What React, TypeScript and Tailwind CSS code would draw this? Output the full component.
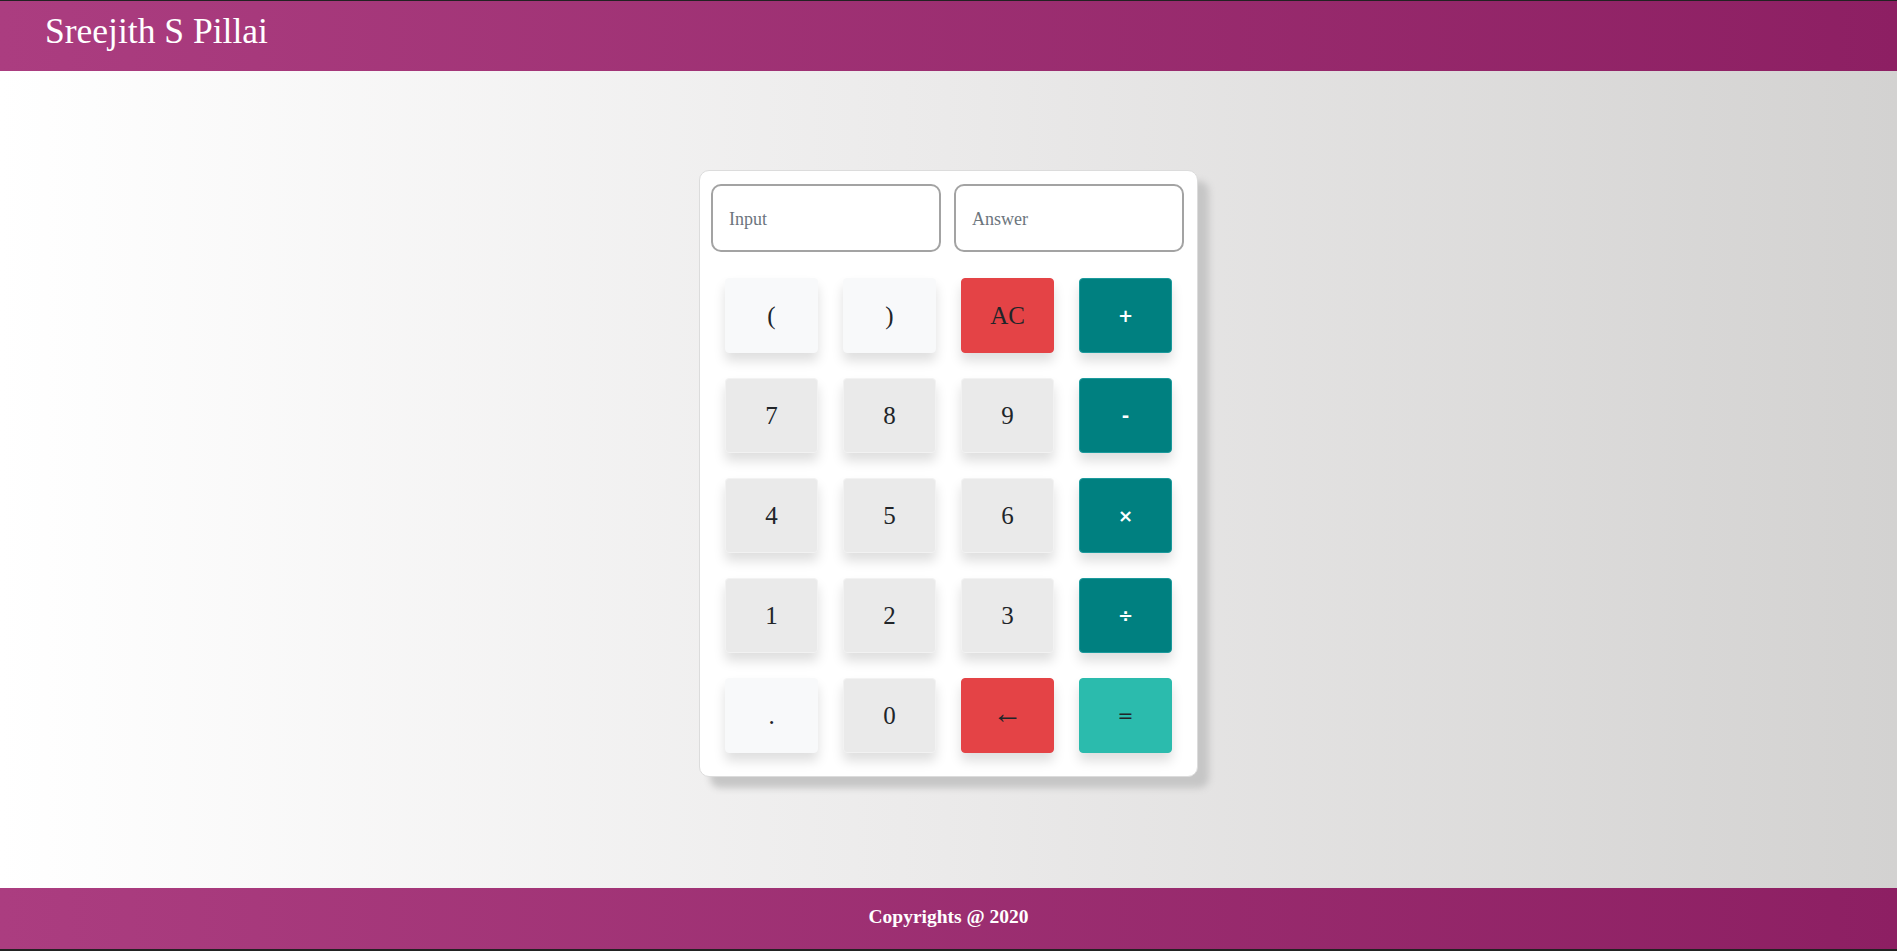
import { useState } from "react";

type Key = { label: string; kind: "light" | "digit" | "danger" | "op" | "eq" };

const keys: Key[] = [
  { label: "(", kind: "light" },
  { label: ")", kind: "light" },
  { label: "AC", kind: "danger" },
  { label: "+", kind: "op" },
  { label: "7", kind: "digit" },
  { label: "8", kind: "digit" },
  { label: "9", kind: "digit" },
  { label: "-", kind: "op" },
  { label: "4", kind: "digit" },
  { label: "5", kind: "digit" },
  { label: "6", kind: "digit" },
  { label: "×", kind: "op" },
  { label: "1", kind: "digit" },
  { label: "2", kind: "digit" },
  { label: "3", kind: "digit" },
  { label: "÷", kind: "op" },
  { label: ".", kind: "light" },
  { label: "0", kind: "digit" },
  { label: "←", kind: "danger" },
  { label: "=", kind: "eq" },
];

const kindClass: Record<Key["kind"], string> = {
  light: "bg-[#f8f9fa] border-[#f8f9fa] text-[#212529] text-[25px] font-['Liberation_Serif',serif]",
  digit: "bg-[#eaeaea] border-[#f2f2f2] text-[#212529] text-[25px] font-['Liberation_Serif',serif]",
  danger: "bg-[#e44346] border-[#e44346] text-[#212529] text-[25px] font-['Liberation_Serif',serif]",
  op: "bg-[#008080] border-[#1a9a9c] text-white text-[18px] font-bold font-['DejaVu_Sans',sans-serif]",
  eq: "bg-[#2bbbad] border-[#2bbbad] text-[#212529] text-[19px] font-['DejaVu_Sans',sans-serif]",
};

export default function App() {
  const [input, setInput] = useState("");
  const [answer, setAnswer] = useState("");

  const press = (k: string) => {
    if (k === "AC") {
      setInput("");
      setAnswer("");
    } else if (k === "←") {
      setInput(input.slice(0, -1));
    } else if (k === "=") {
      try {
        const expr = input.replace(/×/g, "*").replace(/÷/g, "/");
        // eslint-disable-next-line no-new-func
        setAnswer(String(Function(`return (${expr})`)()));
      } catch (e) {
        setAnswer("Error");
      }
    } else {
      setInput(input + k);
    }
  };

  return (
    <div className="h-screen w-full flex flex-col border-t border-[#222] border-b-2 font-['Liberation_Serif',serif]">
      {/* Header */}
      <header className="h-[70px] shrink-0 flex items-start pt-[13px] px-[45px] bg-gradient-to-r from-[#ab3d80] to-[#8d1f63]">
        <h1 className="text-white text-[35.5px] leading-none">Sreejith S Pillai</h1>
      </header>

      {/* Main */}
      <main className="flex-1 flex justify-center items-start pt-[99px] bg-gradient-to-r from-white via-[#ebeaea] to-[#d3d2d1]">
        <div className="w-[499px] bg-white border border-[#dcdcdc] rounded-[10px] shadow-[11px_11px_7px_#c6c6c6] pt-[13px] pb-[23px]">
          <div className="flex gap-[13px] px-[11px]">
            <input
              value={input}
              onChange={(e) => setInput(e.target.value)}
              placeholder="Input"
              className="w-[230px] h-[68px] border-2 border-[#a3a3a3] rounded-[10px] px-[16px] pt-[3px] text-[18px] text-[#495057] placeholder:text-[#6c757d] outline-none"
            />
            <input
              value={answer}
              readOnly
              placeholder="Answer"
              className="w-[230px] h-[68px] border-2 border-[#a3a3a3] rounded-[10px] px-[16px] pt-[3px] text-[18px] text-[#495057] placeholder:text-[#6c757d] outline-none"
            />
          </div>

          <div className="grid grid-cols-[repeat(4,93px)] auto-rows-[75px] gap-[25px] justify-center mt-[26px]">
            {keys.map((k) => (
              <button
                key={k.label}
                onClick={() => press(k.label)}
                className={`rounded-[4px] border flex items-center justify-center shadow-[0_8px_12px_rgba(0,0,0,0.13)] ${kindClass[k.kind]}`}
              >
                {k.label === "←" ? <span className="text-[30px] leading-none -mt-[5px]">←</span> : k.label}
              </button>
            ))}
          </div>
        </div>
      </main>

      {/* Footer */}
      <footer className="h-[61px] shrink-0 flex items-center justify-center pb-[4px] bg-gradient-to-r from-[#ab3d80] to-[#8d1f63]">
        <p className="text-white text-[19.5px] font-bold">Copyrights @ 2020</p>
      </footer>
    </div>
  );
}
